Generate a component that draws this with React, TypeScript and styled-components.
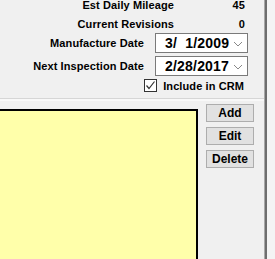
import React from 'react'
import styled, { createGlobalStyle } from 'styled-components'

const GlobalStyle = createGlobalStyle`
	html, body {
		margin: 0;
		padding: 0;
		background: #f0f0f0;
		overflow: hidden;
	}
	body {
		font-family: 'Liberation Sans', Arial, sans-serif;
		color: #000;
	}
`

const Window = styled.div`
	display: flex;
	width: 275px;
	height: 259px;
	overflow: hidden;
`

const Panel = styled.div`
	width: 264px;
	display: flex;
	flex-direction: column;
`

const Divider = styled.div`
	width: 2px;
	background: #6e6e6e;
	border-left: 1px solid #a8a8a8;
`

const Gutter = styled.div`
	flex: 1;
	background: #f4f4f4;
`

const Fields = styled.div`
	display: flex;
	flex-direction: column;
	margin-top: -5px;
`

const StatRow = styled.div`
	display: flex;
	justify-content: flex-end;
	align-items: center;
	height: 19px;
	padding-right: 19px;
	font-size: 11px;
	font-weight: bold;
	letter-spacing: 0.1px;
`

const StatValue = styled.span`
	width: 71px;
	text-align: right;
`

const DateRow = styled.div`
	display: flex;
	justify-content: flex-end;
	align-items: center;
	gap: 11px;
	height: 20px;
	margin-top: ${p => p.$gap}px;
	padding-right: 16px;
	font-size: 11px;
	font-weight: bold;
	letter-spacing: 0.1px;
`

const DateBox = styled.div`
	box-sizing: border-box;
	width: 93px;
	height: 20px;
	background: #fff;
	border: 1px solid #7a7a7a;
	display: flex;
	align-items: center;
	padding-left: 9px;
	font-size: 14px;
	font-weight: bold;
	letter-spacing: 0.2px;
`

const DateText = styled.span`
	flex: 1;
	white-space: pre;
`

const Chevron = styled.svg`
	width: 10px;
	height: 6px;
	margin-right: 4px;
	margin-top: 2px;
`

const CheckRow = styled.div`
	display: flex;
	justify-content: flex-end;
	align-items: center;
	gap: 6px;
	height: 13px;
	margin-top: 3px;
	padding-right: 20px;
	font-size: 11px;
	font-weight: bold;
	letter-spacing: 0.1px;
`

const CheckBox = styled.span`
	box-sizing: border-box;
	width: 13px;
	height: 13px;
	background: #fff;
	border: 1px solid #333;
	display: flex;
	align-items: center;
	justify-content: center;
`

const Separator = styled.div`
	margin-top: 6px;
	height: 1px;
	background: #d6d6d6;
	border-bottom: 2px solid #f8f8f8;
`

const Lower = styled.div`
	flex: 1;
	display: flex;
	gap: 8px;
	padding-top: 3px;
`

const NotesBox = styled.div`
	box-sizing: border-box;
	width: 199px;
	margin-top: 5px;
	margin-left: -1px;
	background: #ffffaa;
	border: 1px solid #000;
	border-bottom: none;
	border-left: none;
	border-top-width: 2px;
	border-right-width: 2px;
`

const Buttons = styled.div`
	display: flex;
	flex-direction: column;
	gap: 5px;
`

const Button = styled.button`
	box-sizing: border-box;
	width: 48px;
	height: 18px;
	padding: 0;
	background: #e1e1e1;
	border: 1px solid #adadad;
	font-family: 'Liberation Sans', Arial, sans-serif;
	font-size: 12px;
	font-weight: bold;
	color: #000;
`

export default function App() {
	return (
		<Window>
			<GlobalStyle />
			<Panel>
				<Fields>
					<StatRow>
						<span>Est Daily Mileage</span>
						<StatValue>45</StatValue>
					</StatRow>
					<StatRow>
						<span>Current Revisions</span>
						<StatValue>0</StatValue>
					</StatRow>
					<DateRow $gap={0}>
						<span>Manufacture Date</span>
						<DateBox>
							<DateText>3/  1/2009</DateText>
							<Chevron viewBox='0 0 10 6'>
								<path d='M1 1 L5 5 L9 1' fill='none' stroke='#888' strokeWidth='1' />
							</Chevron>
						</DateBox>
					</DateRow>
					<DateRow $gap={3}>
						<span>Next Inspection Date</span>
						<DateBox>
							<DateText>2/28/2017</DateText>
							<Chevron viewBox='0 0 10 6'>
								<path d='M1 1 L5 5 L9 1' fill='none' stroke='#888' strokeWidth='1' />
							</Chevron>
						</DateBox>
					</DateRow>
					<CheckRow>
						<CheckBox>
							<svg width='11' height='11' viewBox='0 0 11 11'>
								<path d='M1.5 5.5 L4 8.5 L9.5 1.5' fill='none' stroke='#333' strokeWidth='1.2' />
							</svg>
						</CheckBox>
						<span>Include in CRM</span>
					</CheckRow>
				</Fields>
				<Separator />
				<Lower>
					<NotesBox />
					<Buttons>
						<Button>Add</Button>
						<Button>Edit</Button>
						<Button>Delete</Button>
					</Buttons>
				</Lower>
			</Panel>
			<Divider />
			<Gutter />
		</Window>
	)
}
